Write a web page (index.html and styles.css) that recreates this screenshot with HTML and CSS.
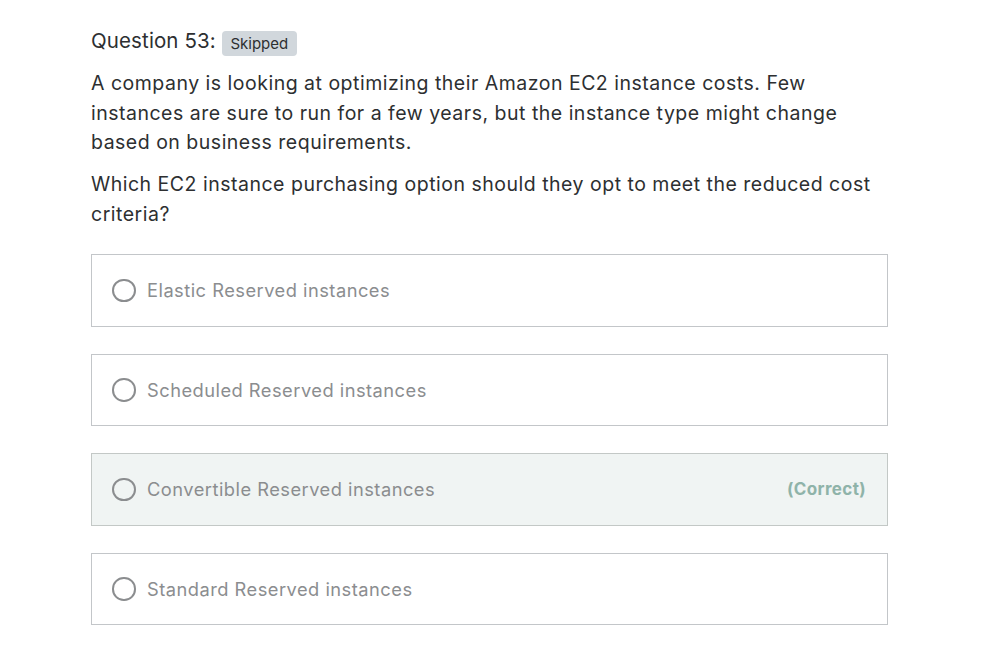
FILE: index.html
```html
<!DOCTYPE html>
<html lang="en">
<head>
<meta charset="utf-8">
<title>Question 53</title>
<link rel="stylesheet" href="styles.css">
</head>
<body>
<main class="question">
  <div class="q-header">
    <span class="q-title">Question 53:</span>
    <span class="badge">Skipped</span>
  </div>
  <div class="q-body">
    <p>A company is looking at optimizing their Amazon EC2 instance costs. Few instances are sure to run for a few years, but the instance type might change based on business requirements.</p>
    <p>Which EC2 instance purchasing option should they opt to meet the reduced cost criteria?</p>
  </div>
  <ul class="options">
    <li class="option">
      <span class="radio"></span>
      <span class="opt-text">Elastic Reserved instances</span>
    </li>
    <li class="option">
      <span class="radio"></span>
      <span class="opt-text">Scheduled Reserved instances</span>
    </li>
    <li class="option correct">
      <span class="radio"></span>
      <span class="opt-text">Convertible Reserved instances</span>
      <span class="tag">(Correct)</span>
    </li>
    <li class="option">
      <span class="radio"></span>
      <span class="opt-text">Standard Reserved instances</span>
    </li>
  </ul>
</main>
</body>
</html>
```
FILE: styles.css
```css
html, body {
  margin: 0;
  padding: 0;
  background: #ffffff;
}
body {
  font-family: Inter, "Noto Sans", "Liberation Sans", sans-serif;
  color: #2d2f31;
}
.question {
  width: 797px;
  padding: 27px 0 0 91px;
}
.q-header {
  display: flex;
  align-items: flex-start;
  gap: 6px;
}
.q-title {
  font-size: 20.5px;
  line-height: 28px;
  letter-spacing: 0.12px;
}
.badge {
  margin-top: 4px;
  background: #d1d7dc;
  border-radius: 4px;
  font-size: 15px;
  line-height: 25px;
  padding: 0 8.5px;
  color: #2d2f31;
}
.q-body {
  margin-top: 13px;
  font-size: 19.5px;
  line-height: 29.5px;
  letter-spacing: 0.5px;
}
.q-body p {
  margin: 0 0 12.5px 0;
}
.q-body p:last-child {
  margin-bottom: 0;
}
.options {
  list-style: none;
  margin: 25px 0 0 0;
  padding: 0;
  display: flex;
  flex-direction: column;
  gap: 27px;
}
.option {
  box-sizing: border-box;
  height: 72.5px;
  border: 1px solid #c3c6c9;
  display: flex;
  align-items: center;
  padding: 0 21px 0 20px;
  font-size: 18.3px;
  color: #8b8d8f;
}
.option.correct {
  background: #f0f4f3;
  border-color: #c3c8c6;
}
.radio {
  box-sizing: border-box;
  width: 23.5px;
  height: 23.5px;
  border: 2.6px solid #8b8d8f;
  border-radius: 50%;
  margin-right: 11.5px;
  flex: none;
}
.opt-text {
  flex: 1;
  letter-spacing: 0.48px;
}
.tag {
  font-weight: 700;
  font-size: 17px;
  letter-spacing: 0.35px;
  color: #8fb3a9;
}
```
